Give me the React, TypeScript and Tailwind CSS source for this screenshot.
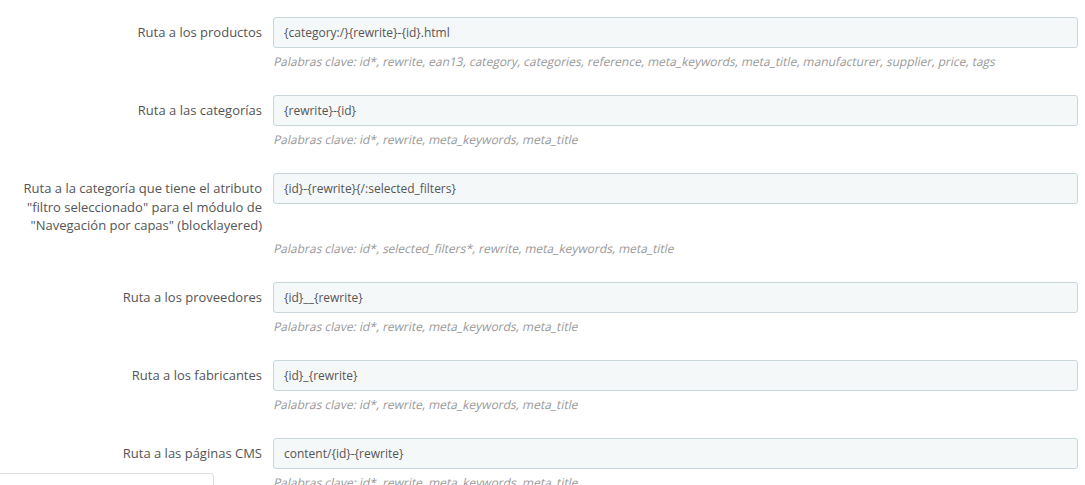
const ROUTES = [
  {
    label: 'Ruta a los productos',
    value: '{category:/}{rewrite}-{id}.html',
    keywords: 'id*, rewrite, ean13, category, categories, reference, meta_keywords, meta_title, manufacturer, supplier, price, tags',
  },
  {
    label: 'Ruta a las categorías',
    value: '{rewrite}-{id}',
    keywords: 'id*, rewrite, meta_keywords, meta_title',
  },
  {
    label: 'Ruta a la categoría que tiene el atributo "filtro seleccionado" para el módulo de "Navegación por capas" (blocklayered)',
    value: '{id}-{rewrite}{/:selected_filters}',
    keywords: 'id*, selected_filters*, rewrite, meta_keywords, meta_title',
  },
  {
    label: 'Ruta a los proveedores',
    value: '{id}__{rewrite}',
    keywords: 'id*, rewrite, meta_keywords, meta_title',
  },
  {
    label: 'Ruta a los fabricantes',
    value: '{id}_{rewrite}',
    keywords: 'id*, rewrite, meta_keywords, meta_title',
  },
  {
    label: 'Ruta a las páginas CMS',
    value: 'content/{id}-{rewrite}',
    keywords: 'id*, rewrite, meta_keywords, meta_title',
  },
];

export default function App() {
  return (
    <div className="min-h-screen bg-white font-['Open_Sans','Noto_Sans',sans-serif] pt-[17px] pr-[7px]">
      {ROUTES.map((route) => (
        <div key={route.label} className="mb-[24px]">
          <div className="grid grid-cols-[262px_1fr] gap-x-[11px]">
            <label className="pt-[6px] pl-[20px] text-right text-[13px] leading-[18.5px] text-[#555555]">
              {route.label}
            </label>
            <input
              type="text"
              defaultValue={route.value}
              className="h-[31px] w-full rounded-[3px] border border-[#c7d6db] bg-[#f5f8f9] px-[10px] text-[12px] text-[#555555] outline-none"
            />
          </div>
          <div className="grid grid-cols-[262px_1fr] gap-x-[11px]">
            <div />
            {/* reference uses a slanted regular face, not the true italic */}
            <p className="mt-[5px] ml-[1px] w-max origin-left skew-x-[-12deg] whitespace-nowrap text-[12px] leading-[18px] text-[#999999]">
              Palabras clave: {route.keywords}
            </p>
          </div>
        </div>
      ))}

      {/* floating panel peeking at the bottom left */}
      <div className="fixed bottom-[-20px] left-0 h-[32px] w-[214px] rounded-tr-[4px] border border-l-0 border-[#dcdcdc] bg-white" />
    </div>
  );
}
